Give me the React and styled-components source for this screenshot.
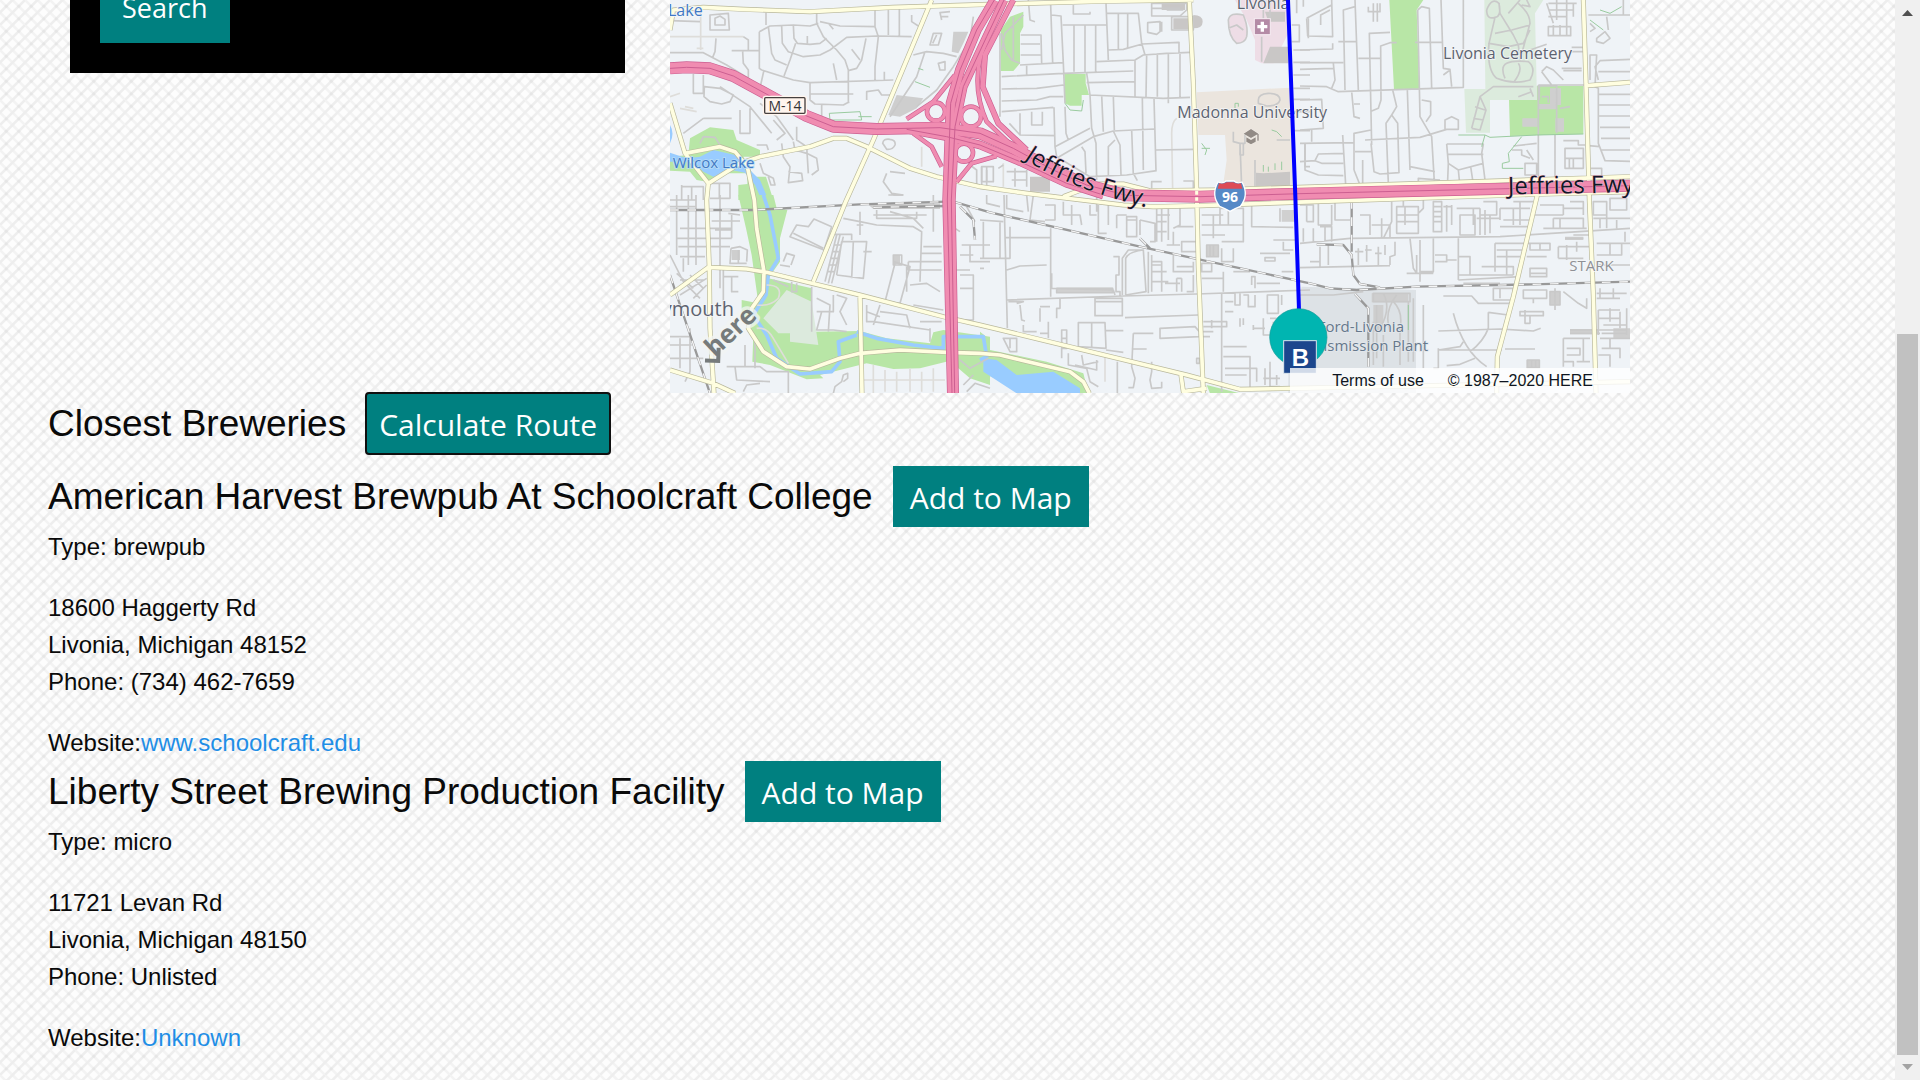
import React from "react";
import styled, { createGlobalStyle } from "styled-components";

const weave = encodeURIComponent(
  `<svg xmlns="http://www.w3.org/2000/svg" width="25" height="25" viewBox="0 0 2 2"><rect width="2" height="2" fill="#fdfdfd"/><g fill="none" stroke-width=".2"><path stroke="#f3f3f3" d="M-1 -1L3 3M0 -1L3 2M-1 0L2 3"/><path stroke="#eeeeee" d="M-1 2L2 -1M-1 3L3 -1M0 3L3 0"/></g><g fill="#e6e6e6"><circle cx=".5" cy=".5" r=".12"/><circle cx="1.5" cy=".5" r=".12"/><circle cx=".5" cy="1.5" r=".12"/><circle cx="1.500" cy="1.500" r=".12"/></g></svg>`
);

const GlobalStyle = createGlobalStyle`
  *, *::before, *::after { box-sizing: border-box; }
  body {
    margin: 0;
    color: #0a0a0a;
    background: #fdfdfd url("data:image/svg+xml,${weave}");
    font: 24px/37px "Liberation Sans", Arial, sans-serif;
  }
`;

const Page = styled.div`
  display: flex;
  min-height: 100vh;
`;

const Content = styled.main`
  flex: 1;
  min-width: 0;
`;

const TopRow = styled.div`
  display: grid;
  grid-template-columns: 37fr 64fr;
  gap: 45px;
  align-items: start;
  padding: 0 265px 0 70px;
`;

const SearchPanel = styled.form`
  display: flex;
  align-items: flex-end;
  height: 73px;
  padding: 0 30px 30px;
  overflow: hidden;
  background: #000;
`;

const Button = styled.button`
  flex: none;
  height: 61px;
  padding: 2px 17px 0;
  border: 0;
  background: #008080;
  color: #fefefe;
  font: 30px/59px "Open Sans", "Noto Sans", sans-serif;
  white-space: nowrap;
`;

const SearchButton = styled(Button)`
  height: 72px;
  padding: 0 22px;
  font-size: 27px;
`;

const RouteButton = styled(Button)`
  padding: 2px 13px 0;
  border-radius: 3px;
  outline: 2px solid #101010;
  outline-offset: -1px;
`;

const MapFrame = styled.section`
  position: relative;
  height: 393px;
  overflow: hidden;
`;

const MapDrawing = styled.svg`
  display: block;
  width: 100%;
  height: 100%;
  font-family: "Open Sans", "Noto Sans", sans-serif;
`;

const Attribution = styled.div`
  position: absolute;
  right: 0;
  bottom: 0;
  display: flex;
  justify-content: flex-end;
  gap: 24px;
  width: 340px;
  padding-right: 37px;
  background: rgba(255, 255, 255, 0.8);
  color: #0f1621;
  font-size: 16px;
  line-height: 25px;

  a {
    color: inherit;
    text-decoration: none;
  }
`;

const Listing = styled.section`
  padding: 0 48px;
`;

const TitleRow = styled.header`
  display: flex;
  align-items: flex-start;
  gap: 20px;
  height: ${(p) => (p.$intro ? "73px" : "62px")};
`;

const Title = styled.h2`
  margin: 0;
  font-size: 37px;
  font-weight: 400;
  line-height: 61px;
`;

const Text = styled.p`
  margin: 0 0 ${(p) => (p.$last ? "0" : "24px")};
`;

const SiteLink = styled.a`
  color: #1f8ee6;
  text-decoration: none;
`;

const Scrollbar = styled.aside`
  display: flex;
  flex-direction: column;
  align-items: center;
  flex: 0 0 25px;
  background: #f0f0f0;
`;

const ScrollTrack = styled.div`
  display: flex;
  flex: 1;
  flex-direction: column;
  justify-content: flex-end;
`;

const ScrollThumb = styled.div`
  width: 21px;
  height: 721px;
  background: #c1c1c1;
`;

const ScrollArrow = styled.svg`
  display: block;
  width: 25px;
  height: 25px;
`;

const tiles = [
  [0, 0], [960, 0], [1920, 0],
  [0, 585], [960, 585], [1920, 585],
];

const areas = [
  [0, "#b8e6a6", "M90 415L150 382 220 390 230 420 300 450V470H250L283 530 318 530 340 600H235V555L262 552 262 520 200 520 140 545 110 540 90 515 30 512V470L85 465Z"],
  [0, "#99ccff", "M30 458V485H100L130 515 160 530 215 510 255 518 285 555 305 600H325L300 540 270 510 225 465 160 450 120 470 80 475ZM30 375Q45 400 30 430Z"],
  [0, "#cecece", "M685 345L710 285 790 295 770 325 720 350ZM880 95H925L910 130 895 160 875 155Z"],
  [1, "#b8e6a6", "M62 90L90 50 130 35V80L120 100V190L100 213H62ZM253 222H317V250L327 285H305V317H270L255 310Z"],
  [1, "#eedde6", "M745 60Q750 35 790 45Q805 80 800 110Q795 130 770 130Q745 110 745 60ZM765 0H925V100L880 190H845L825 180V120L800 60Z"],
  [1, "#ebe5de", "M650 277L930 263 945 565H728L740 480 735 405H655Z"],
  [1, "#c9c7c6", "M870 140H925V190H850ZM828 518L850 520 930 515V560H828ZM855 35H915V65H865ZM150 530H210V575H150ZM580 55H640V88H580ZM640 45Q668 45 668 65Q668 85 640 85ZM545 12H615V30H545Z"],
  [2, "#b8e6a6", "M268 0H370L350 30 358 268H282ZM627 300H710V258H850V402L630 408Z"],
  [2, "#dcebdd", "M553 0H730L705 40 710 258V300H570V398H498L493 267H556Z"],
  [2, "#cfcfcf", "M667 355H713V380H667ZM766 355H792V395H766ZM717 312H768V328H717ZM750 265H783V315H750Z"],
  [3, "#b8e6a6", "M235 0H340L350 40L382 45L360 130V200L325 250L455 280V410L600 408L680 430L810 445L820 412L850 405L990 425V570L930 550L895 520L880 495L780 520L700 522L620 505L480 540L490 550L440 553L330 510L277 500L280 420L245 370V315L295 325L275 180L258 100Z"],
  [3, "#dceadd", "M380 285L455 320 475 450 390 440V415L355 415 310 370Z"],
  [3, "#cecece", "M215 165H240V195H215ZM700 180H720V208H700ZM620 25H840V42H640Z"],
  [4, "#b8e6a6", "M0 410L25 430 30 465 200 500 310 535 325 595H150L0 530ZM680 570L780 595H690Z"],
  [4, "#99ccff", "M10 490L50 495 110 540 220 530 300 580V595H110L10 530Z"],
  [4, "#dde2e6", "M965 275L1308 285V600H925V440Z"],
  [4, "#d0d0d0", "M905 45H945V80H905ZM230 278H398V293H230ZM680 150H715V185H680Z"],
  [5, "#cecece", "M215 295H325V322H215ZM810 402H895V418H810ZM940 400H990V430H940ZM750 290H780V330H750ZM795 125H850V135H795ZM220 330H250V410H220ZM680 495H718V520H680Z"],
];

const streets = [
  "M30 62L120 65M150 45L205 40 208 90 150 90ZM165 55L180 48 195 58V75H165ZM168 115L165 155 158 172M30 158H130L200 195 265 235 330 280M215 152H298M248 155L250 190 265 210V235M250 110L265 120V150M298 95L330 78 400 75 450 78L475 70M298 95V205L305 210M318 38V75M325 80L335 160 345 180 380 195M365 78L367 130 385 155 430 170 480 165 510 150 560 112 650 108 755 110M400 75L402 115 412 130 450 133 480 130 500 115M407 130L390 180 372 228M470 35V70L490 110 530 150 555 180 565 210V310M480 65L540 78 645 80M645 30V80L655 110 645 200V240M575 148L600 180M618 115L605 180 590 205 565 212M305 210L400 240 450 248 700 240M312 210L302 255 310 265M450 250V300L465 312 550 315 568 305M450 282H580M520 190L530 240M685 30V105M718 25V110M505 70L520 88M442 108V130M673 215V240M485 315V360M620 300V275L655 270 665 285 690 285M100 222V280H130V225M133 260L180 265 220 285 210 305 185 312 150 305 132 290ZM180 260L270 320 335 400M130 355H215M70 400L130 355M240 330V400H270V325M300 310L350 350 375 385 400 420M340 360L375 400 350 420M365 430L370 470 390 500 385 548 428 542 425 520 385 515M400 425L405 450 440 460 470 475 475 510 455 525M410 380V420L440 440 445 520M290 435H320L325 450M300 490L310 520 340 535 345 555 333 555 325 530M65 560H130V600M65 555V600M95 560V600M150 550H210V595H150M178 550V595M760 165L800 155 850 160 890 170M795 155L770 230 690 350M810 135L820 100 845 100 835 135ZM818 130L830 105M845 60L840 38 870 35M845 50H865M668 430Q670 415 690 418 708 420 705 435 698 450 680 448ZM680 520L670 545 695 580 730 585M690 515L735 520M685 585H730M755 45V65L775 78M835 190L855 185V210H840ZM890 540L930 495 950 510V560M965 500V560M980 510V560M120 430L130 410 165 412 180 435M940 50L930 120 880 200 830 270 770 320",
  "M60 100V350M65 230L250 220 460 213M65 267L170 265 250 255M65 303L170 300 210 290 250 290M65 335L220 322M120 340V405L225 407M155 335V375H187V335M88 370L120 405M122 105H183L185 190M122 132H180M122 165H182M120 195L250 188M140 195V225M145 0L150 60 165 65M212 15L218 188M215 45L243 48 250 190 255 310M248 75H380M282 75V215M315 75V215M347 75V215M378 10L385 180M280 15V42H330V35M380 40H475L485 130 495 165M415 40V150M443 40V145M350 185L465 180 490 165 560 160 630 157M385 150L430 148 487 132 597 127V160M465 180V290M500 165L498 290M532 160V290M565 160V310M600 160V292M320 220L330 285M320 248L465 245M330 285L550 295 630 292M330 285L335 385 348 430 350 540M365 285L370 395M400 290L403 390M487 295L490 510M522 295L528 512M222 322L225 440 230 470M255 320L258 400 265 420M225 440L330 385M235 472L340 410 400 393 522 387M305 440L315 455 318 520M400 393L420 435 423 525M405 420L385 440V525M455 390L460 525M230 470L330 530 440 525 530 512M460 520L472 542M527 450L640 448M515 10H620V30L600 48H515ZM515 25H600M503 68L540 65V95L530 103 503 97ZM545 65V95M575 50H640V90H575ZM560 30H610M515 570V545H545M610 543H640V570H610M5 500H40V545H5ZM20 500V545M55 505L70 495M105 505V560M140 510V560M80 515H140M95 540H140M845 110V185M850 30V60M870 0V60M745 85L770 75 790 90M745 60Q750 35 790 45Q805 80 800 110Q795 130 770 130Q745 110 745 60ZM940 150H990M940 187H990M940 225H990M940 265H990M940 298H990M940 335H990M940 392H990M935 75H958V125H935M950 0V40M970 20V0M985 55V115M975 430V500H990M835 300Q835 282 865 280Q900 280 900 300Q895 318 860 318L835 310ZM760 395V425L780 430 785 560M795 400V430L780 430V465H790V430M825 480V560M890 420H930M65 100L75 150 95 180 120 190M100 50V180M65 150L75 100 130 45",
  "M20 55L95 15M20 55L23 108 98 110 95 0M62 75V45L90 30M0 150L98 147V130M135 270L130 30 165 20M165 0L175 270M115 125H170M0 188H130M0 208L100 205M100 190L105 240 95 265M0 258L80 260 115 275 490 262V0M175 175H240M215 435L208 100 270 97M290 128H270L242 138 243 300 235 325 215 333M353 30L365 20 388 25 395 265M353 30L360 350 395 410 403 545M345 127H425M423 0L430 205 450 208 455 260M430 225L450 210M322 270L330 510M278 270L290 320 275 345 293 370 297 520M275 345L258 370 265 550M155 275L162 350 180 355M162 312H180M365 300L392 305 392 345 378 365M195 420L360 412 440 388 475 388V360L455 350 435 360V388M0 430L160 428M128 405L137 555M162 510V400L213 390M162 510L180 555M165 455H213M213 430L222 515 240 522 297 518M0 485L45 482 65 490 130 490M45 482L55 462 130 460M15 430V510L55 525 130 527M0 300L65 298 70 385 0 390M35 390V425M188 480V555M440 432H550L545 460 555 540M440 432L445 490 475 510 550 490M445 463H550M475 510L478 540M512 500L518 540M445 490L443 540M330 500L405 515M355 550V535L420 540M560 30Q575 -10 597 10Q605 50 585 52Q560 60 560 30M597 10L600 40 640 105 655 135 660 180M567 130Q560 210 590 235Q640 255 690 240Q710 205 685 185Q640 180 620 190Q600 200 615 235M655 10Q690 40 690 70L660 180M660 0L625 40M690 75L635 90 585 100M585 52L567 130 625 140 670 130 690 90M655 190Q670 210 640 248M680 0L690 20 665 15M515 385L540 290 580 260 700 260M515 385L540 390 558 330 540 290M525 320L555 330M520 355L550 360M690 265L700 290M655 290L695 275M715 255V530M770 255V400M715 255H855M725 215L740 200 760 210 790 240M725 215L755 255M740 10L760 70M770 0V60M800 0V107M745 80H812V107H745ZM760 75V107M780 75V107M745 10H830M745 30H820M745 50H800M820 10V50M865 45H990M970 0V45M870 70L885 85 870 95M890 115L915 95 930 115 910 130 890 125ZM920 50L925 90M785 205H845M790 212H845M815 142H850M815 155H850M740 133L690 150M870 240V165H890L885 260M895 240L885 200 900 182 990 178M895 215H990M860 250L895 265V430L915 482 990 484M895 283H990M895 315H990M897 348H990M900 382H990M903 415H990M905 450H990M865 437L900 440M795 445H850V505H795ZM795 475H850M808 475V505M820 475V505M790 422H835V435H855M765 405V540M675 490H710V525H675ZM640 438L710 430M635 450H665V465L690 475M680 450L700 480M220 10V65M232 10V65M205 20V35H240V10M870 505H905V530H870ZM718 300V258H770M725 290H745V308M780 325L810 320",
  "M85 0V210M108 0V210M50 0V180M30 15H110M30 35H110M60 100H215M50 130H215M55 155H210M60 185H135M180 0V280M205 55L240 60M155 78H240M215 55V130M165 105H215M213 160L240 155 262 165 260 200M213 160L210 205H260M235 165V205M188 245H235M215 245V290H235M30 180L70 260 120 310M60 255H130M50 235L100 280M100 310L140 270M60 300L140 250M190 220V330M70 230V190M90 240L130 280M390 125L410 90 445 95 462 72 515 95 492 165ZM400 115L490 160M370 200L380 175 403 182 393 210M360 210L390 215M545 140H620L610 250 530 240M545 140L530 240M580 140L575 250M530 120L495 260M540 120L505 265M550 125L515 265M522 150H542M516 170H536M510 190H532M505 210H528M500 230H524M525 118H575V135M610 170H635M700 180H725V210H700ZM705 205L675 320 720 325 750 215 700 200M740 215V290M550 70L600 80 650 90 760 95 785 110 780 260M600 50V120M590 90H610M650 45V70H770V50M640 60H800M690 50L760 70 790 100M745 200V225H845M745 200H845M790 155H845M785 175H845M820 0V110M750 270L800 265 840 290M640 380L810 405M620 350L660 365M660 350L740 360 750 400M470 310L510 330 505 410M470 350H500M485 350L470 405H520L560 410M530 300L560 310 540 350 560 390M520 300V350H500M810 400V440M780 380H845M760 330L850 345M620 330V380H640M660 330L640 390M340 255L385 275M395 260V290H410V265M455 275V410M200 515L300 515 320 530 385 530V595M225 515L230 555 330 560M250 590L260 570 300 565M255 450V515M285 440V520M30 450H95M30 425H90M90 400V530M60 430V520M30 490H130M90 530L75 560M520 595L525 575 545 560 550 540 563 535 563 550 550 560M900 240H940V375H900M885 60V100L900 110M905 150H990M930 150V200H990M900 180H940M900 495L930 520 985 490M940 540L910 570M920 590L945 565 990 580M920 35L945 80M885 225H930M900 280H940M700 0H730",
  "M72 0L82 400M0 75L70 80M10 80V190H60V80M0 190H90V95M75 128H212M212 100V305M0 220H12M80 225L120 213 200 210M80 315L430 303 650 297 990 285M215 235V280L400 285 405 300M230 280H398V293H230ZM400 185H417V240L408 240V290H420V305M427 300V190L445 165 490 165M437 300V190Q445 170 490 165L498 290 437 300M345 310H427V362H345ZM345 320H427M435 368L655 360M295 383H375L378 460 295 455ZM335 383V458M378 407H430M378 465L430 472M540 400L645 395 658 410 658 425 540 430ZM460 415H520M460 415L455 515 465 550 460 578H445M455 462H500M515 500V530L510 555 515 580 545 578V560M412 500V595M265 475V510L320 520 330 560 355 575M285 510L350 525V495M305 480L310 510 355 500M245 405H260V460H245ZM245 430H260M245 460V490M180 340V380M85 320H130L110 325M120 330L125 375 135 378M180 335H210M240 310V340H230V370M130 390V410H170M205 380V430M180 415H205M70 430H110V470H90ZM90 430V460M160 0L150 75 195 80M140 0L145 50M20 0V25L60 35M80 0V40L130 50M195 30H225V75H195M250 20V60H300L305 90M275 30V90M330 30V60H350M350 0V50M385 30V90M355 30V115H380M410 60V100M440 65H470V125H440ZM440 75H470M410 60H440M480 75L525 85V140H510M480 75V120M530 40V140M545 40V140M565 40V135M530 60H570M530 80H560M530 110H560M590 95H640M580 110V150M605 140H650V170H605ZM600 40V90L580 100M560 150H600M665 60H730M665 90H730M665 120H735M700 60V130M680 150H715V185H680ZM690 150V185M700 150V185M720 40H790V90H720ZM745 40V90M725 140H790V90M725 160V200H760V160M815 30V95L940 97M900 40V80M880 135H945M910 140V165H940M840 175H930M855 188H885V198H855ZM505 170V295M515 200H545V290M515 180V290M515 230H560M515 260H565M515 210H545M580 180V230H640V200M590 250V290M605 250V290M590 250H605M620 290H640V240M555 265H600M590 215H640M665 205H695V230H665ZM665 250H730M730 230V290M725 295V590M670 380H740V395H670M695 375V400M735 320H760M765 295V330H780V295M790 300H805V335H825V300M735 350H760M862 300H895V355H862ZM780 370V395M790 370V390M730 485H810V580M730 455H800M735 520H830V560M735 540H800M820 400H855M820 390V405M850 370V420H870M855 520V570M870 500V575H900M880 380V400M890 540V570M850 550H900M815 270V245H825V280M830 265H900M905 230H940M760 230H810M650 490h8v15h-8zM665 410H700M665 425H690M905 300V330M915 360H950M870 370H890",
  "M0 30H40V80H20M55 20V90H95V30M105 20V75H150M20 30V80M10 100V140M40 100V140M60 95H95V140M75 90V140M0 145L150 130 600 125 990 100M0 218L270 212M60 155V215M30 200H60M85 150V210M285 140V180L270 185V210M165 170H190M175 160V210M200 150V200M195 165H215M235 155V210M225 175H245M255 150V180M180 60H210V120M215 90H270V130M245 70V130M275 20V80L250 130M290 35H355V115H290ZM290 60H355M290 80H355M315 35V90M290 15H310V35M370 10V40L355 55M400 20H425V110H400ZM400 35H425M400 50H425M400 65H425M400 80H425M440 30V110M455 30V90M430 35H455M480 60H525V120H480ZM475 130V255M520 40V90M470 40H540M540 40V120M555 45V120M530 70H600M550 20H590V60H540M570 60V115M600 40H690M600 40V75M640 40V90M610 75H690M640 20H700M660 20V90M600 95H690M400 130V230H360M360 135V260M330 130L340 220 350 235M350 180V235M320 235H400M405 180H440V200H405M440 195H470M475 185H510V240H475ZM475 255L660 245M510 240H640M490 265H600M585 145H690M590 165H680M590 185H660M585 145V230M620 165V240M545 215H640V240M690 145H750V165H690ZM720 145V165M690 220H740V245H690ZM690 235H740M680 185H740M775 155H870M775 190H850M775 155V190M800 150V195M830 140V170M820 120H870M795 130H850M760 70H850V100M760 70V100M730 100H860M780 70V100M720 30H790V60M700 60H790M810 20H850V60M790 40H850M880 20H920V60H880ZM930 10H980V45H930ZM880 70H990M900 70V100M950 75V100M920 60V100M890 145H990M930 145V180M965 145V180H890M975 110V140M890 210H990M430 303H515L535 325H640M580 280H640V315H580ZM600 280V310M670 285H740V310H670ZM660 350H730V362H660ZM675 345V385H690V360M700 310V325M750 290H780V330H750ZM765 280V345M790 290L835 325 860 340V310M370 330V520M415 408L600 402 700 408 722 400M415 465H605M615 462H705M415 460V520H400M460 355Q490 470 560 515M565 352V400Q550 440 510 470M565 352L625 360M415 465L480 455 490 440M440 512L480 508 525 490M682 495H718V518H682ZM695 495V518M707 495V518M790 430H870M790 430V515M800 460H840V480H800M850 430V500M830 500H870M790 500H820V515M810 405H980M810 415H900M895 345V420M895 345H960M930 340V380M895 370H960M980 340V420M960 350V400M900 430H990M910 390H980M905 415H980M905 460H960V490M895 480H930V515M930 430V460M890 310H960M940 280V310M900 280V310M890 295H980M220 295H330V320H220ZM230 330V490M250 295Q275 340 240 400M290 300Q250 350 270 410M280 320Q310 350 300 400V510M220 380V510M340 310V500M325 320V500M250 420V515M0 300L100 300 190 290",
];

const paleStreets = [
  "M122 15V150M30 110H250M110 145H130M30 290L60 280M60 325L110 335M75 320L100 325M785 440V500",
  "M590 355Q575 365 575 400L578 570M70 490V560",
  "",
  "M320 270Q370 270 355 310Q330 335 290 330M290 400Q320 395 340 430L385 505M610 555H855M640 510V595M675 525V590M710 530V590M750 520V590M785 530V590M820 520V590",
  "M375 475V560",
  "",
];

const paths = [
  "M510 360L508 340 600 335 605 360H510M595 350H635M765 245L810 262M775 205L790 210",
  "M665 430L680 450 675 465M665 445H690M765 325V310H775V320M850 515V495M865 515V500M885 510V490M905 510V485M875 390L890 395 905 410M255 310L270 330 305 333 310 300",
  "M475 405H555L570 412 710 405 850 402M555 405L545 440M665 410L625 460 628 485 607 490V505H670M870 60L910 90M900 30L930 40 965 20",
  "",
  "",
  "M325 330V405",
];

const yellowRoads =
  "M30 90L40 30 130 22 250 28 450 35 700 22 990 13 1320 4 1600 0M815 0L640 420 555 610 460 845M30 310L75 460 145 550 140 600 148 805 150 985 162 1180M75 460L180 440 225 455 262 500 283 600 290 685 312 815 310 875 275 925 265 985 310 1055 380 1100 450 1107 540 1075 600 1060 720 1050 860 1057 960 1060 1020 1065 1230 1115 1270 1145 1288 1180M145 550L240 490 300 470 450 440 520 415 560 415 620 440 750 505 830 530 960 560 1100 580 1240 597 1390 615 1480 620 1620 617 1960 605 2620 583 2910 575M1210 590L1310 552 1390 552 1470 572 1660 570 1920 562 2910 530M30 885L145 802 260 807 320 817 600 885 850 950 960 975 1580 1125 1740 1168 1900 1165 2910 1145M600 885L606 1180M30 1110L160 1150 225 1180M1588 0L1600 250 1610 570 1615 800 1630 1180M2770 0L2778 250 2788 600 2800 885 2808 1180M2778 257L2910 247M2632 585L2560 890 2512 1070 2510 1180M1563 1125L1570 1175 1640 1165";

const railways =
  "M30 630L280 630 600 613 860 605M640 622L860 618M880 605L990 637 1440 740 1950 850 2010 865 2090 870 2270 860 2620 853 2910 845M30 825L60 915 150 1180M1970 733L2050 735 2075 765 2080 825 2100 852 2160 862M2075 600V755M2085 882L2125 925V1100M900 620L940 660 945 720M1440 715L1470 745";

const motorways = [
  [32, "M30 205L80 202 150 205 220 228 330 288 440 348 520 380 650 387 840 383 960 400 1060 445 1180 510 1280 555 1400 586 1620 590 1920 581 2910 557"],
  [22, "M740 388L860 410 960 435 1080 485 1220 550 1330 585"],
  [26, "M1003 0L950 90 900 210 872 310 862 600 876 1180"],
  [22, "M1032 0L980 110 910 260 885 380 874 600 884 1180"],
  [14, "M1060 0L975 165 968 260 1015 370 1100 450"],
  [10, "M992 90Q920 230 980 365L1080 460M740 357L820 305 885 225M760 400L815 440 845 500M890 545L935 490 1010 468M801 335A27 27 0 1 1 855 335A27 27 0 1 1 801 335ZM903 350A30 30 0 1 1 963 350A30 30 0 1 1 903 350ZM885 458A27 27 0 1 1 939 458A27 27 0 1 1 885 458Z"],
];

function TiledPaths({ data, color, width }) {
  return tiles.map(([x, y], i) => (
    <path
      key={i}
      d={data[i]}
      transform={`translate(${x} ${y})`}
      fill="none"
      stroke={color}
      strokeWidth={width}
      strokeLinejoin="round"
    />
  ));
}

function RouteMap() {
  return (
    <MapDrawing viewBox="30 0 2880 1179" preserveAspectRatio="xMinYMin slice" role="img" aria-label="Route map of Livonia">
      <rect x="30" width="2880" height="1179" fill="#eff3f7" />
      {areas.map(([tile, fill, d], i) => (
        <path key={i} d={d} fill={fill} transform={`translate(${tiles[tile][0]} ${tiles[tile][1]})`} />
      ))}
      <g fill="none" stroke="#99ccff" strokeWidth="11" strokeLinejoin="round">
        <path d="M310 585L330 645 355 775 325 825 318 885 280 945 320 1005 350 1075 420 1122 515 1115 540 1085 535 1025 590 1005M590 995L650 1015 760 1035 850 1045V1010L970 1010 980 1070 960 1080" />
      </g>
      <TiledPaths data={paleStreets} color="#deddda" width="5" />
      <TiledPaths data={streets} color="#c9c9c9" width="5" />
      <TiledPaths data={paths} color="#9acb9f" width="3" />
      <g fill="none" strokeLinejoin="round">
        <path d={railways} stroke="#999" strokeWidth="7" />
        <path d={railways} stroke="#f5f5f5" strokeWidth="4" strokeDasharray="26 26" />
        <path d={yellowRoads} stroke="#b9b89c" strokeWidth="15" />
        <path d={yellowRoads} stroke="#fffee0" strokeWidth="11" />
        {motorways.map(([w, d]) => <path key={d} d={d} stroke="#cc5f91" strokeWidth={w + 4} />)}
        {motorways.map(([w, d]) => <path key={d} d={d} stroke="#f08cb1" strokeWidth={w} />)}
        {motorways.slice(0, 4).map(([w, d]) => <path key={d} d={d} stroke="#cc5f91" strokeWidth="3" />)}
        <path d="M1610 572V602" stroke="#fffee0" strokeWidth="9" strokeDasharray="12 8" />
      </g>

      <g fontSize="48" fill="#5d6370" stroke="#f4f6f8" strokeWidth="5" paintOrder="stroke">
        <text x="128" y="48" textAnchor="end" fill="#4179c5">Lake</text>
        <text x="38" y="503" fontSize="45" fill="#4179c5" stroke="#b8dcf5">Wilcox Lake</text>
        <text x="1730" y="26">Livonia</text>
        <text x="1552" y="354">Madonna University</text>
        <text x="2349" y="177">Livonia Cemetery</text>
        <text x="2232" y="996" textAnchor="end" fontSize="45" fill="#66788b" stroke="#e3e7eb">Ford-Livonia</text>
        <text x="2304" y="1054" textAnchor="end" fontSize="45" fill="#66788b" stroke="#e3e7eb">Transmission Plant</text>
        <text x="2728" y="813" fontSize="45" fill="#8e9095">STARK</text>
        <text x="222" y="948" textAnchor="end" fontSize="60">Plymouth</text>
      </g>

      <g transform="translate(207 1006) rotate(-43)">
        <text textAnchor="middle" x="12" y="20" fontSize="78" fontWeight="700" fill="#767b7b" stroke="#f2f5f3" strokeWidth="22" strokeLinejoin="round" strokeOpacity=".75" paintOrder="stroke">here</text>
        <path d="M-104 6L-76 34-48 6" fill="none" stroke="#767b7b" strokeWidth="12" />
      </g>

      <rect x="308" y="287" width="133" height="59" rx="8" fill="#fff5ee" />
      <rect x="314" y="293" width="121" height="47" rx="3" fill="#fff5ee" stroke="#45403f" strokeWidth="4" />
      <text x="375" y="332" textAnchor="middle" fontSize="42" fill="#333">M-14</text>

      <g transform="translate(1807 80)">
        <rect x="-24" y="-24" width="48" height="48" fill="#b48ba6" stroke="#f7eef3" strokeWidth="3" />
        <path d="M-5-15H5V-5H15V5H5V15H-5V5H-15V-5H-5Z" fill="#fff" />
      </g>
      <path d="M1751 401L1773 387 1795 401 1773 414ZM1759 412V425L1773 433 1787 425V412L1773 420ZM1792 402H1796V422H1792Z" fill="#928b86" stroke="#f3efea" strokeWidth="3" paintOrder="stroke" />

      <path d="M1674 546Q1688 552 1698 543H1722Q1732 552 1746 546Q1768 586 1741 619Q1726 625 1710 634Q1694 625 1679 619Q1652 586 1674 546Z" fill="#5689c6" stroke="#fff" strokeWidth="4" />
      <path d="M1677 550Q1690 554 1700 547H1720Q1730 554 1743 550L1747 566H1673Z" fill="#dd4b56" />
      <text x="1710" y="606" textAnchor="middle" fontSize="42" fontWeight="700" fill="#fff">96</text>

      <path id="fwyCurve" d="M1092 476Q1230 572 1520 636" fill="none" />
      <g fontSize="72" fill="#111827" stroke="#f3b9cd" strokeWidth="3" paintOrder="stroke">
        <text><textPath href="#fwyCurve">Jeffries Fwy.</textPath></text>
        <text x="2544" y="583" transform="rotate(-1 2544 583)">Jeffries Fwy.</text>
      </g>

      <path d="M1884 0L1906 590 1917 930" fill="none" stroke="#00f" strokeWidth="12" />
      <circle cx="1915" cy="1012" r="86" fill="#00b5b1" stroke="#159b98" strokeWidth="2" />
      <rect x="1871" y="1022" width="98" height="98" fill="#1b468d" stroke="#dbe6ee" strokeWidth="3" />
      <text x="1921" y="1098" textAnchor="middle" fontSize="72" fontWeight="700" fontFamily="Liberation Sans, Arial, sans-serif" fill="#fff">B</text>
    </MapDrawing>
  );
}

function Brewery({ name, type, street, city, phone, site }) {
  return (
    <article>
      <TitleRow>
        <Title>{name}</Title>
        <Button type="button">Add to Map</Button>
      </TitleRow>
      <Text>Type: {type}</Text>
      <Text>
        {street}
        <br />
        {city}
        <br />
        Phone: {phone}
      </Text>
      <Text $last>
        Website:<SiteLink href="#">{site}</SiteLink>
      </Text>
    </article>
  );
}

const breweries = [
  {
    name: "American Harvest Brewpub At Schoolcraft College",
    type: "brewpub",
    street: "18600 Haggerty Rd",
    city: "Livonia, Michigan 48152",
    phone: "(734) 462-7659",
    site: "www.schoolcraft.edu",
  },
  {
    name: "Liberty Street Brewing Production Facility",
    type: "micro",
    street: "11721 Levan Rd",
    city: "Livonia, Michigan 48150",
    phone: "Unlisted",
    site: "Unknown",
  },
];

export default function App() {
  return (
    <>
      <GlobalStyle />
      <Page>
        <Content>
          <TopRow>
            <SearchPanel>
              <SearchButton type="button">Search</SearchButton>
            </SearchPanel>
            <MapFrame>
              <RouteMap />
              <Attribution>
                <a href="#">Terms of use</a>
                <span>© 1987–2020 HERE</span>
              </Attribution>
            </MapFrame>
          </TopRow>
          <Listing>
            <TitleRow $intro>
              <Title>Closest Breweries</Title>
              <RouteButton type="button">Calculate Route</RouteButton>
            </TitleRow>
            {breweries.map((b) => (
              <Brewery key={b.name} {...b} />
            ))}
          </Listing>
        </Content>
        <Scrollbar aria-hidden="true">
          <ScrollArrow viewBox="0 0 25 25">
            <path d="M7 16L12.500 10 18 16Z" fill="#505050" />
          </ScrollArrow>
          <ScrollTrack>
            <ScrollThumb />
          </ScrollTrack>
          <ScrollArrow viewBox="0 0 25 25">
            <path d="M7 9L12.500 15 18 9Z" fill="#a3a3a3" />
          </ScrollArrow>
        </Scrollbar>
      </Page>
    </>
  );
}
